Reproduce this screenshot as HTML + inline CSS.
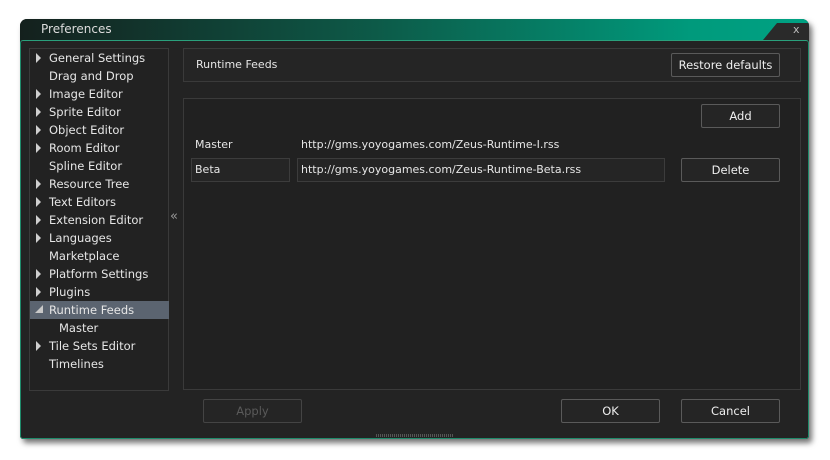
<!DOCTYPE html>
<html><head><style>
body{margin:0;width:830px;height:460px;background:#fff;position:relative;overflow:hidden;font-family:"DejaVu Sans","Liberation Sans",sans-serif;font-size:11px;color:#e6e6e6}
.win{position:absolute;left:20px;top:19px;width:789px;height:420px;background:#232323;border-radius:7px 7px 3px 3px;box-shadow:3px 4px 6px rgba(0,0,0,.55);overflow:hidden}
.title{position:absolute;left:0;top:0;width:789px;height:21px;background:linear-gradient(90deg,#14201d 0%,#0d5a48 45%,#009a7c 85%,#00a283 100%)}
.notch{position:absolute;right:0;top:4px;width:46px;height:17px;background:#2a2a2a;clip-path:polygon(14px 0,100% 0,100% 100%,0 100%)}
.body{position:absolute;left:0;top:21px;width:787px;height:397px;border:1px solid #1e8a6a;border-top:1px solid #2aa07c;border-radius:3px;background:#232323}
.t{position:absolute;white-space:nowrap}
.panel{position:absolute;background:#222;border:1px solid #3a3a3a}
.btn{position:absolute;border:1px solid #5a5a5a;background:#252525;border-radius:2px;text-align:center;line-height:22px;color:#eee;font-size:11.5px}
.row{position:absolute;left:0;height:18px;line-height:18px;width:139px;font-size:11.5px}
.tri{position:absolute;left:6px;top:4px;width:0;height:0;border-top:5px solid transparent;border-bottom:5px solid transparent;border-left:5px solid #cfcfcf}
</style></head><body>
<div class="win">
 <div class="title"><span class="t" style="left:21px;top:3px;font-size:12px;color:#ddd">Preferences</span></div>
 <div class="notch"></div>
 <span class="t" style="left:773px;top:4px;font-size:11px;color:#bbb">x</span>
 <div class="body"></div>
 <div class="panel" style="left:9px;top:29px;width:138px;height:341px">
  <div class="row" style="top:0"><div class="tri"></div><span class="t" style="left:19px">General Settings</span></div>
  <div class="row" style="top:18px"><span class="t" style="left:19px">Drag and Drop</span></div>
  <div class="row" style="top:36px"><div class="tri"></div><span class="t" style="left:19px">Image Editor</span></div>
  <div class="row" style="top:54px"><div class="tri"></div><span class="t" style="left:19px">Sprite Editor</span></div>
  <div class="row" style="top:72px"><div class="tri"></div><span class="t" style="left:19px">Object Editor</span></div>
  <div class="row" style="top:90px"><div class="tri"></div><span class="t" style="left:19px">Room Editor</span></div>
  <div class="row" style="top:108px"><span class="t" style="left:19px">Spline Editor</span></div>
  <div class="row" style="top:126px"><div class="tri"></div><span class="t" style="left:19px">Resource Tree</span></div>
  <div class="row" style="top:144px"><div class="tri"></div><span class="t" style="left:19px">Text Editors</span></div>
  <div class="row" style="top:162px"><div class="tri"></div><span class="t" style="left:19px">Extension Editor</span></div>
  <div class="row" style="top:180px"><div class="tri"></div><span class="t" style="left:19px">Languages</span></div>
  <div class="row" style="top:198px"><span class="t" style="left:19px">Marketplace</span></div>
  <div class="row" style="top:216px"><div class="tri"></div><span class="t" style="left:19px">Platform Settings</span></div>
  <div class="row" style="top:234px"><div class="tri"></div><span class="t" style="left:19px">Plugins</span></div>
  <div class="row" style="top:252px;background:#5b6470"><div style="position:absolute;left:5px;top:4px;width:0;height:0;border-left:8px solid transparent;border-bottom:8px solid #c8c8c8"></div><span class="t" style="left:19px">Runtime Feeds</span></div>
  <div class="row" style="top:270px"><span class="t" style="left:29px">Master</span></div>
  <div class="row" style="top:288px"><div class="tri"></div><span class="t" style="left:19px">Tile Sets Editor</span></div>
  <div class="row" style="top:306px"><span class="t" style="left:19px">Timelines</span></div>
 </div>
 <span class="t" style="left:150px;top:190px;color:#999;font-size:13px">«</span>
 <div class="panel" style="left:163px;top:29px;width:616px;height:32px;background:#252525"><span class="t" style="left:12px;top:9px">Runtime Feeds</span></div>
 <div class="btn" style="left:651px;top:34px;width:107px">Restore defaults</div>
 <div class="panel" style="left:163px;top:79px;width:616px;height:290px;background:#212121"></div>
 <div class="btn" style="left:681px;top:85px;width:77px">Add</div>
 <span class="t" style="left:175px;top:119px">Master</span>
 <span class="t" style="left:281px;top:119px">http://gms.yoyogames.com/Zeus-Runtime-I.rss</span>
 <div class="panel" style="left:171px;top:139px;width:97px;height:22px;background:#252525;border-color:#3c3c3c"><span class="t" style="left:3px;top:4px">Beta</span></div>
 <div class="panel" style="left:277px;top:139px;width:366px;height:22px;background:#252525;border-color:#3c3c3c"><span class="t" style="left:3px;top:4px">http://gms.yoyogames.com/Zeus-Runtime-Beta.rss</span></div>
 <div class="btn" style="left:661px;top:139px;width:97px">Delete</div>
 <div class="btn" style="left:183px;top:380px;width:97px;color:#5a5a5a;border-color:#444">Apply</div>
 <div class="btn" style="left:541px;top:380px;width:97px">OK</div>
 <div class="btn" style="left:661px;top:380px;width:97px">Cancel</div>
 <div style="position:absolute;left:356px;top:415px;width:78px;height:3px;background:repeating-linear-gradient(90deg,#555 0 1px,transparent 1px 2px)"></div>
</div>
</body></html>
